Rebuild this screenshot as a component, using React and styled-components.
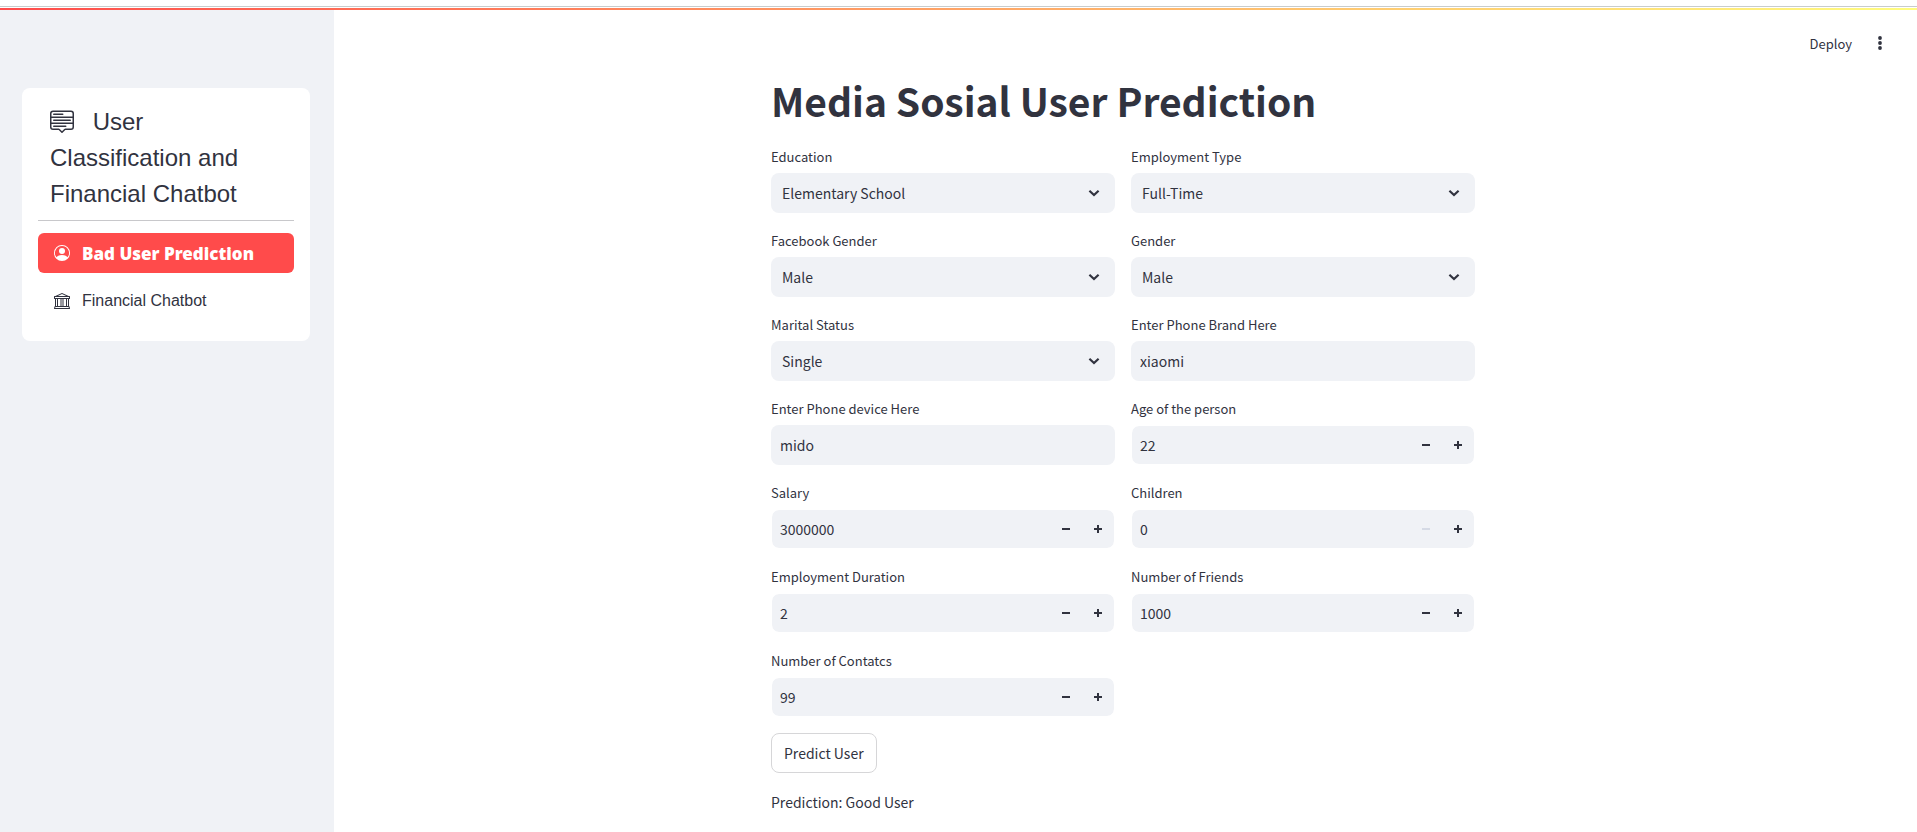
import React, { useState } from "react";
import styled, { createGlobalStyle } from "styled-components";
import { BsMenuUp, BsPersonCircle, BsBank } from "react-icons/bs";

const GlobalStyle = createGlobalStyle`
  *, *::before, *::after { box-sizing: border-box; }
  body {
    margin: 0;
    background: #ffffff;
    color: #31333f;
    font-family: "Source Sans Pro", "Noto Sans CJK JP", sans-serif;
    font-size: 14px;
  }
  button, input, select { font: inherit; color: inherit; }
`;

const Page = styled.div`
  display: flex;
  flex-direction: column;
  min-height: 100vh;
`;

const TopEdge = styled.div`
  height: 8px;
  padding-top: 6px;

  &::before {
    content: "";
    display: block;
    height: 1px;
    background: #c8cccc;
  }
`;

const Decoration = styled.div`
  height: 2px;
  background: linear-gradient(90deg, #ff4b4b, #fffd80);
`;

const Body = styled.div`
  display: flex;
  flex: 1;
`;

const Sidebar = styled.aside`
  flex: 0 0 334px;
  padding: 78px 24px 24px 22px;
  background: #f0f2f6;
`;

const MenuCard = styled.nav`
  padding: 16px 16px 20px;
  border-radius: 8px;
  background: #ffffff;
  font-family: "Liberation Sans", Arial, sans-serif;
`;

const MenuTitle = styled.h2`
  margin: 0;
  padding: 0 12px 8px;
  border-bottom: 1px solid #c8c8cb;
  font-size: 24px;
  line-height: 36px;
  font-weight: 400;

  svg {
    margin-right: 12px;
    vertical-align: -3px;
  }
`;

const MenuList = styled.ul`
  display: flex;
  flex-direction: column;
  gap: 8px;
  margin: 12px 0 0;
  padding: 0;
  list-style: none;
`;

const MenuLink = styled.a`
  display: flex;
  align-items: center;
  gap: 12px;
  height: 40px;
  padding: 0 16px;
  border-radius: 6px;
  background: ${(p) => (p.$active ? "#ff4b4b" : "transparent")};
  color: ${(p) => (p.$active ? "#ffffff" : "#31333f")};
  font-family: ${(p) => (p.$active ? '"Noto Sans", "Open Sans", sans-serif' : "inherit")};
  font-size: ${(p) => (p.$active ? "17px" : "16px")};
  font-weight: ${(p) => (p.$active ? 900 : 400)};
  text-decoration: none;
`;

const Main = styled.main`
  display: flex;
  flex: 1;
  flex-direction: column;
  min-width: 0;
  padding-right: 5px;
`;

const Toolbar = styled.header`
  display: flex;
  align-items: center;
  justify-content: flex-end;
  gap: 16px;
  height: 66px;
  padding-right: 20px;
`;

const ToolbarButton = styled.button`
  display: flex;
  align-items: center;
  justify-content: center;
  min-width: 24px;
  height: 28px;
  padding: 0;
  border: 0;
  background: none;
  font-size: 13px;
`;

const Content = styled.form`
  display: flex;
  flex-direction: column;
  gap: 16px;
  width: 100%;
  max-width: 704px;
  margin: 0 auto;
`;

const Title = styled.h1`
  margin: 0;
  padding-bottom: 5px;
  font-size: 39px;
  line-height: 48px;
  font-weight: 700;
`;

const Grid = styled.div`
  display: grid;
  grid-template-columns: repeat(2, minmax(0, 1fr));
  gap: 16px;
`;

const Field = styled.div`
  display: flex;
  flex-direction: column;
  gap: 4px;
`;

const Label = styled.label`
  font-size: 13px;
  line-height: 24px;
`;

const Control = styled.div`
  display: grid;
  align-items: center;
  height: 40px;
  border-radius: 8px;
  background: #f0f2f6;
`;

const SelectBox = styled.select`
  grid-area: 1 / 1;
  width: 100%;
  height: 40px;
  padding: 0 40px 0 11px;
  border: 0;
  border-radius: 8px;
  background: transparent;
  appearance: none;
`;

const Chevron = styled.svg`
  grid-area: 1 / 1;
  justify-self: end;
  margin-right: 15px;
  pointer-events: none;
`;

const TextBox = styled.input`
  min-width: 0;
  width: 100%;
  height: 38px;
  padding: 0 9px;
  border: 0;
  border-radius: 8px;
  background: transparent;
`;

const NumberControl = styled.div`
  display: flex;
  align-items: center;
  height: 40px;
  border: 1px solid #ffffff;
  border-radius: 8px;
  background: #f0f2f6;
  background-clip: padding-box;

  input { padding: 0 8px; }
`;

const StepButton = styled.button`
  display: flex;
  flex: 0 0 32px;
  align-items: center;
  justify-content: center;
  height: 36px;
  padding: 0;
  border: 0;
  background: none;
  color: #31333f;

  &:disabled { color: #d5dae5; }
`;

const SubmitButton = styled.button`
  align-self: flex-start;
  height: 40px;
  padding: 0 12px;
  border: 1px solid #d6d6d8;
  border-radius: 8px;
  background: #ffffff;
`;

const Result = styled.p`
  margin: 0;
  line-height: 26px;
`;

function SelectField({ id, label, options }) {
  return (
    <Field>
      <Label htmlFor={id}>{label}</Label>
      <Control>
        <SelectBox id={id} defaultValue={options[0]}>
          {options.map((o) => (
            <option key={o}>{o}</option>
          ))}
        </SelectBox>
        <Chevron width="12" height="12" viewBox="0 0 12 12" fill="none" aria-hidden="true">
          <path d="M1.4 3.7 6 8l4.6-4.3" stroke="currentColor" strokeWidth="2.2" />
        </Chevron>
      </Control>
    </Field>
  );
}

function TextField({ id, label, value }) {
  return (
    <Field>
      <Label htmlFor={id}>{label}</Label>
      <Control>
        <TextBox id={id} type="text" defaultValue={value} />
      </Control>
    </Field>
  );
}

function NumberField({ id, label, value }) {
  const [number, setNumber] = useState(value);
  return (
    <Field>
      <Label htmlFor={id}>{label}</Label>
      <NumberControl>
        <TextBox
          id={id}
          type="text"
          inputMode="numeric"
          value={number}
          onChange={(e) => setNumber(Number(e.target.value) || 0)}
        />
        <StepButton
          type="button"
          aria-label={`Decrease ${label}`}
          disabled={number <= 0}
          onClick={() => setNumber(number - 1)}
        >
          <svg width="8" height="8" viewBox="0 0 8 8" aria-hidden="true">
            <path d="M0 3h8v2H0z" fill="currentColor" />
          </svg>
        </StepButton>
        <StepButton type="button" aria-label={`Increase ${label}`} onClick={() => setNumber(number + 1)}>
          <svg width="8" height="8" viewBox="0 0 8 8" aria-hidden="true">
            <path d="M3 0h2v3h3v2H5v3H3V5H0V3h3z" fill="currentColor" />
          </svg>
        </StepButton>
      </NumberControl>
    </Field>
  );
}

export default function App() {
  return (
    <Page>
      <GlobalStyle />
      <TopEdge />
      <Decoration />
      <Body>
        <Sidebar>
          <MenuCard>
            <MenuTitle>
              <BsMenuUp size={24} aria-hidden="true" /> User Classification and Financial Chatbot
            </MenuTitle>
            <MenuList>
              <li>
                <MenuLink href="#prediction" $active>
                  <BsPersonCircle size={16} aria-hidden="true" />
                  Bad User Prediction
                </MenuLink>
              </li>
              <li>
                <MenuLink href="#chatbot">
                  <BsBank size={16} aria-hidden="true" />
                  Financial Chatbot
                </MenuLink>
              </li>
            </MenuList>
          </MenuCard>
        </Sidebar>
        <Main>
          <Toolbar>
            <ToolbarButton type="button">Deploy</ToolbarButton>
            <ToolbarButton type="button" aria-label="Main menu">
              <svg width="4" height="14" viewBox="0 0 4 14" fill="currentColor" aria-hidden="true">
                <circle cx="2" cy="2" r="1.9" />
                <circle cx="2" cy="7" r="1.9" />
                <circle cx="2" cy="12" r="1.9" />
              </svg>
            </ToolbarButton>
          </Toolbar>
          <Content onSubmit={(e) => e.preventDefault()}>
            <Title>Media Sosial User Prediction</Title>
            <Grid>
              <SelectField
                id="education"
                label="Education"
                options={["Elementary School", "High School", "Bachelor", "Master"]}
              />
              <SelectField id="employment" label="Employment Type" options={["Full-Time", "Part-Time"]} />
              <SelectField id="fb-gender" label="Facebook Gender" options={["Male", "Female"]} />
              <SelectField id="gender" label="Gender" options={["Male", "Female"]} />
              <SelectField id="marital" label="Marital Status" options={["Single", "Married"]} />
              <TextField id="brand" label="Enter Phone Brand Here" value="xiaomi" />
              <TextField id="device" label="Enter Phone device Here" value="mido" />
              <NumberField id="age" label="Age of the person" value={22} />
              <NumberField id="salary" label="Salary" value={3000000} />
              <NumberField id="children" label="Children" value={0} />
              <NumberField id="duration" label="Employment Duration" value={2} />
              <NumberField id="friends" label="Number of Friends" value={1000} />
              <NumberField id="contacts" label="Number of Contatcs" value={99} />
            </Grid>
            <SubmitButton type="submit">Predict User</SubmitButton>
            <Result>Prediction: Good User</Result>
          </Content>
        </Main>
      </Body>
    </Page>
  );
}
